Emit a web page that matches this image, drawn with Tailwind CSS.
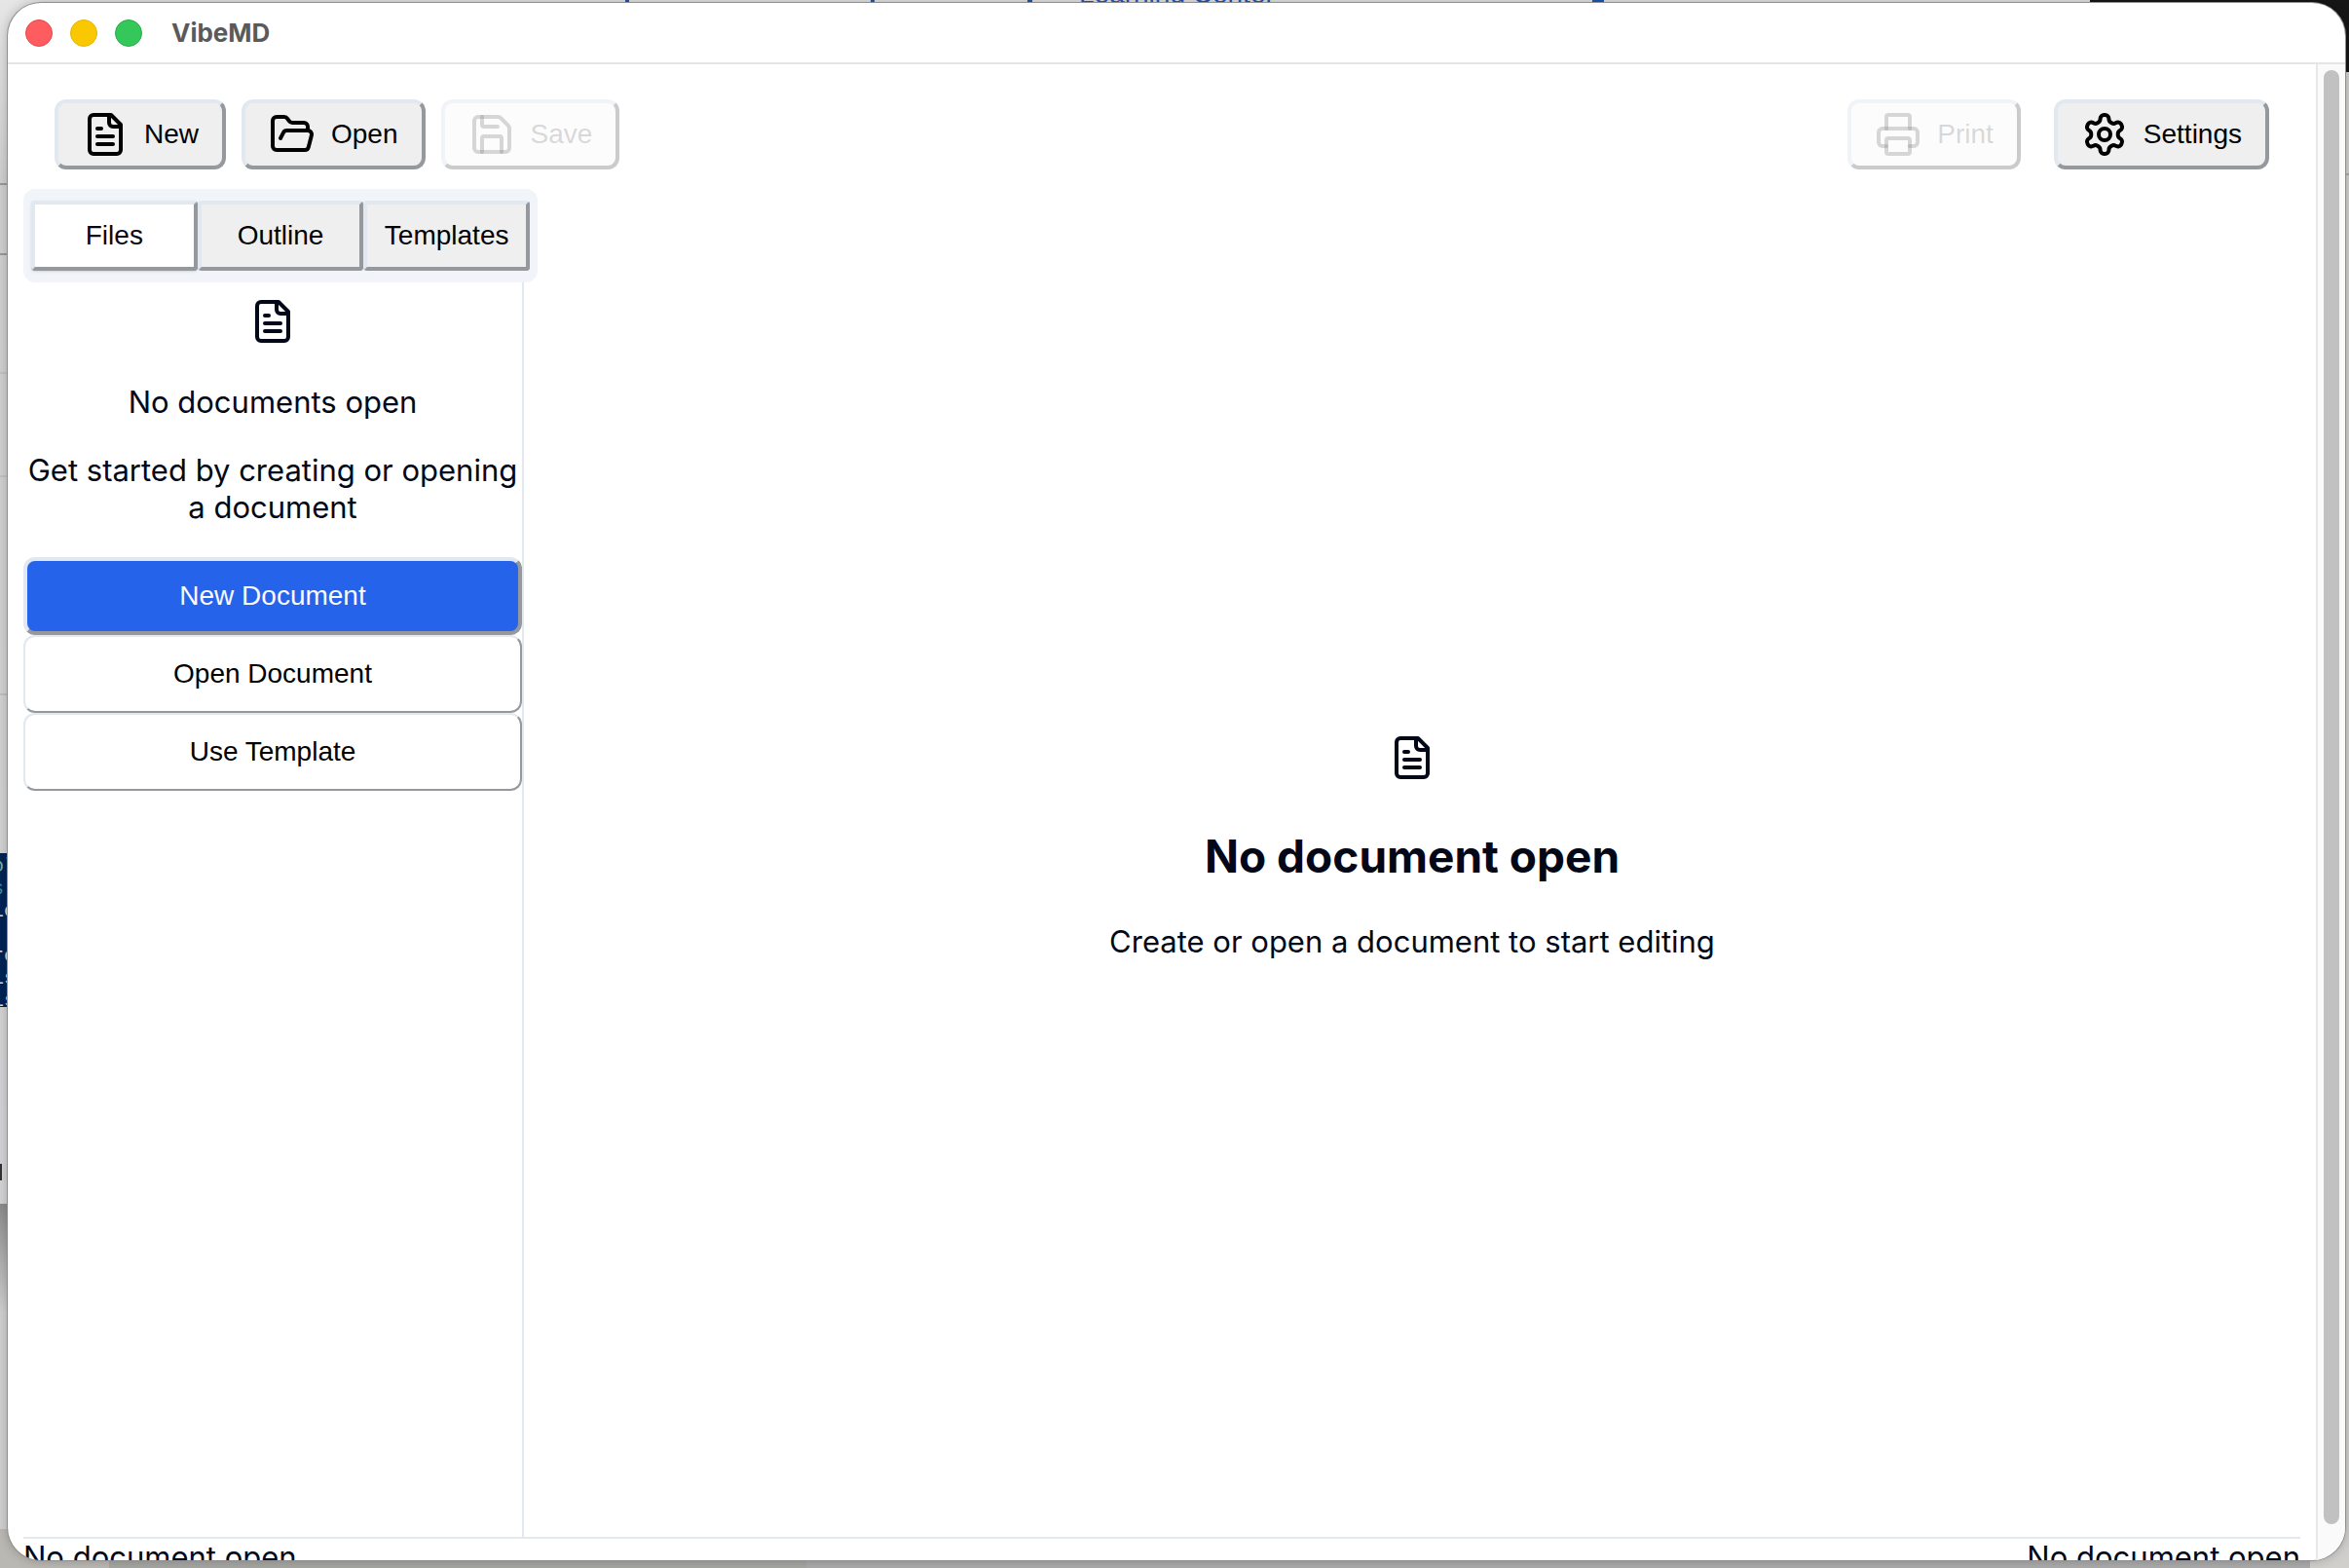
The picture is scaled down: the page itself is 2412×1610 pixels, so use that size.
<!DOCTYPE html>
<html lang="en">
<head>
<meta charset="utf-8">
<title>VibeMD</title>
<script src="https://cdn.jsdelivr.net/npm/@tailwindcss/browser@4"></script>
</head>
<body class="relative isolate h-screen overflow-hidden bg-[#d0d0d0] pt-[3px] pr-1 pb-2 pl-2 font-[Inter,sans-serif] text-[31px] leading-[38px] text-[#020817]">

<!-- Desktop behind the window -->
<div class="absolute inset-0 -z-10 overflow-hidden" aria-hidden="true">
  <div class="absolute inset-x-0 top-0 h-10 bg-[#e2e2e2]"></div>
  <div class="absolute top-0 left-[642px] h-1 w-1 bg-[#1f55b5]"></div>
  <div class="absolute top-0 left-[894px] h-1 w-1 bg-[#1f55b5]"></div>
  <div class="absolute top-0 left-[1055px] h-1 w-[5px] bg-[#1f55b5]"></div>
  <div class="absolute -top-[22px] left-[1108px] font-['Liberation_Sans',sans-serif] text-[28px] leading-8 text-[#1f55b5]">Learning Center</div>
  <div class="absolute top-0 left-[1635px] h-1 w-3 bg-[#1f55b5]"></div>
  <div class="absolute top-0 left-0 h-[1240px] w-10 bg-linear-to-b from-[#e6e6e6] via-[#cfcfcf] via-15% to-[#d4d4d6]"></div>
  <div class="absolute top-[188px] left-0 h-[2px] w-10 bg-[#999999]"></div>
  <div class="absolute top-[260px] left-0 h-[2px] w-10 bg-[#999999]"></div>
  <div class="absolute top-[382px] left-0 h-[2px] w-10 bg-[#c2c2c2]"></div>
  <div class="absolute top-[488px] left-0 h-[2px] w-10 bg-[#c2c2c2]"></div>
  <div class="absolute top-[712px] left-0 h-[2px] w-10 bg-[#bfbfbf]"></div>
  <pre class="absolute top-[876px] left-0 h-[158px] w-2 overflow-hidden bg-[#012456] pt-[2px] font-['Liberation_Mono',monospace] text-[20px] leading-[23px] text-[#d8dde6]"><span class="-ml-2 block text-[#7fb09a]">ol</span><span class="-ml-2 block text-[#3f8f9c]">s:</span><span class="-ml-2 block">lo</span><span class="block h-[23px]"></span><span class="-ml-2 block">re</span><span class="-ml-2 block">is</span><span class="-ml-2 block">is</span></pre>
  <div class="absolute top-[1195px] left-0 h-[17px] w-[2px] bg-[#333333]"></div>
  <div class="absolute top-[1236px] left-0 h-[374px] w-10 bg-linear-to-b from-[#8c8c8c] to-[#d0d0d0] to-30%"></div>
  <div class="absolute bottom-0 left-0 h-10 w-[112px] bg-[#b9b8b3]"></div>
  <div class="absolute right-0 bottom-0 left-[112px] h-5 bg-[#a6a6a2]"></div>
  <div class="absolute right-0 bottom-0 left-[828px] h-5 bg-[#ababab]"></div>
  <div class="absolute right-0 bottom-0 h-[1540px] w-10 bg-[#d0cfcb]"></div>
  <div class="absolute top-[178px] right-0 h-[2px] w-10 bg-[#aaaaaa]"></div>
  <div class="absolute top-0 right-0 h-[74px] w-[266px] bg-[#161616]"></div>
</div>

<div class="flex h-full flex-col overflow-hidden rounded-[34px] bg-white shadow-[0_0_0_1px_#8f8f8f,0_0_12px_rgba(0,0,0,0.25)]">
  <header class="flex h-[63px] shrink-0 items-center gap-[18px] border-b-2 border-[#e5e5e5] pl-[18px]">
    <button type="button" aria-label="Close" class="size-7 rounded-full border border-[#e2464a] bg-[#ff5c60]"></button>
    <button type="button" aria-label="Minimize" class="size-7 rounded-full border border-[#e6b400] bg-[#fac800]"></button>
    <button type="button" aria-label="Zoom" class="size-7 rounded-full border border-[#26ad49] bg-[#34c759]"></button>
    <h1 class="pt-px pl-3 text-[26px] font-bold text-[#5a5a5a]">VibeMD</h1>
  </header>

  <div class="flex min-h-0 flex-1">
    <div class="flex min-w-0 flex-1 flex-col px-4">
      <div class="flex shrink-0 items-center gap-4 px-8 pt-9 pb-5 font-['Liberation_Sans',sans-serif] text-[28px] leading-8 text-black">
        <button type="button" class="flex h-[72px] items-center gap-4 rounded-xl border-4 border-[#e2e8f0] border-r-[#95989d] border-b-[#95989d] bg-[#efefef] px-6">
          <svg class="size-12" viewBox="0 0 24 24" fill="none" stroke="currentColor" stroke-width="2" stroke-linecap="round" stroke-linejoin="round"><path d="M15 2H6a2 2 0 0 0-2 2v16a2 2 0 0 0 2 2h12a2 2 0 0 0 2-2V7Z"/><path d="M14 2v4a2 2 0 0 0 2 2h4"/><path d="M10 9H8"/><path d="M16 13H8"/><path d="M16 17H8"/></svg>
          New
        </button>
        <button type="button" class="flex h-[72px] items-center gap-4 rounded-xl border-4 border-[#e2e8f0] border-r-[#95989d] border-b-[#95989d] bg-[#efefef] px-6">
          <svg class="size-12" viewBox="0 0 24 24" fill="none" stroke="currentColor" stroke-width="2" stroke-linecap="round" stroke-linejoin="round"><path d="m6 14 1.5-2.9A2 2 0 0 1 9.24 10H20a2 2 0 0 1 1.94 2.5l-1.54 6a2 2 0 0 1-1.95 1.5H4a2 2 0 0 1-2-2V5a2 2 0 0 1 2-2h3.9a2 2 0 0 1 1.69.9l.81 1.2a2 2 0 0 0 1.67.9H18a2 2 0 0 1 2 2v2"/></svg>
          Open
        </button>
        <button type="button" disabled class="flex h-[72px] items-center gap-4 rounded-xl border-4 border-[#e2e8f0] border-r-[#95989d] border-b-[#95989d] bg-[#fafafa] px-6 text-black/30 opacity-50">
          <svg class="size-12" viewBox="0 0 24 24" fill="none" stroke="currentColor" stroke-width="2" stroke-linecap="round" stroke-linejoin="round"><path d="M15.2 3a2 2 0 0 1 1.4.6l3.8 3.8a2 2 0 0 1 .6 1.4V19a2 2 0 0 1-2 2H5a2 2 0 0 1-2-2V5a2 2 0 0 1 2-2z"/><path d="M17 21v-7a1 1 0 0 0-1-1H8a1 1 0 0 0-1 1v7"/><path d="M7 3v4a1 1 0 0 0 1 1h7"/></svg>
          Save
        </button>
        <button type="button" disabled class="ml-auto flex h-[72px] items-center gap-4 rounded-xl border-4 border-[#e2e8f0] border-r-[#95989d] border-b-[#95989d] bg-[#fafafa] px-6 text-black/30 opacity-50">
          <svg class="size-12" viewBox="0 0 24 24" fill="none" stroke="currentColor" stroke-width="2" stroke-linecap="round" stroke-linejoin="round"><path d="M6 18H4a2 2 0 0 1-2-2v-5a2 2 0 0 1 2-2h16a2 2 0 0 1 2 2v5a2 2 0 0 1-2 2h-2"/><path d="M6 9V3a1 1 0 0 1 1-1h10a1 1 0 0 1 1 1v6"/><rect x="6" y="14" width="12" height="8" rx="1"/></svg>
          Print
        </button>
        <button type="button" class="ml-[18px] flex h-[72px] items-center gap-4 rounded-xl border-4 border-[#e2e8f0] border-r-[#95989d] border-b-[#95989d] bg-[#efefef] px-6">
          <svg class="size-12" viewBox="0 0 24 24" fill="none" stroke="currentColor" stroke-width="2" stroke-linecap="round" stroke-linejoin="round"><path d="M12.22 2h-.44a2 2 0 0 0-2 2v.18a2 2 0 0 1-1 1.73l-.43.25a2 2 0 0 1-2 0l-.15-.08a2 2 0 0 0-2.73.73l-.22.38a2 2 0 0 0 .73 2.73l.15.1a2 2 0 0 1 1 1.72v.51a2 2 0 0 1-1 1.74l-.15.09a2 2 0 0 0-.73 2.73l.22.38a2 2 0 0 0 2.73.73l.15-.08a2 2 0 0 1 2 0l.43.25a2 2 0 0 1 1 1.73V20a2 2 0 0 0 2 2h.44a2 2 0 0 0 2-2v-.18a2 2 0 0 1 1-1.73l.43-.25a2 2 0 0 1 2 0l.15.08a2 2 0 0 0 2.73-.73l.22-.39a2 2 0 0 0-.73-2.73l-.15-.08a2 2 0 0 1-1-1.74v-.5a2 2 0 0 1 1-1.74l.15-.09a2 2 0 0 0 .73-2.73l-.22-.38a2 2 0 0 0-2.73-.73l-.15.08a2 2 0 0 1-2 0l-.43-.25a2 2 0 0 1-1-1.73V4a2 2 0 0 0-2-2z"/><circle cx="12" cy="12" r="3"/></svg>
          Settings
        </button>
      </div>

      <div class="flex min-h-0 flex-1">
        <aside class="flex w-[514px] shrink-0 flex-col border-r-2 border-[#e2e8f0]">
          <div role="tablist" class="grid h-24 w-[528px] shrink-0 grid-cols-3 items-center rounded-xl bg-[#f1f5f9] px-2 font-['Liberation_Sans',sans-serif] text-[28px] leading-8 text-black">
            <button type="button" role="tab" aria-selected="true" class="h-[72px] rounded-sm border-4 border-[#e2e8f0] border-r-[#95989d] border-b-[#95989d] bg-white text-[#020817] shadow-sm">Files</button>
            <button type="button" role="tab" aria-selected="false" class="h-[72px] rounded-sm border-4 border-[#e2e8f0] border-r-[#95989d] border-b-[#95989d] bg-[#efefef]">Outline</button>
            <button type="button" role="tab" aria-selected="false" class="h-[72px] rounded-sm border-4 border-[#e2e8f0] border-r-[#95989d] border-b-[#95989d] bg-[#efefef]">Templates</button>
          </div>
          <div class="flex flex-col items-center pt-4 text-center">
            <svg class="size-12" viewBox="0 0 24 24" fill="none" stroke="currentColor" stroke-width="2" stroke-linecap="round" stroke-linejoin="round"><path d="M15 2H6a2 2 0 0 0-2 2v16a2 2 0 0 0 2 2h12a2 2 0 0 0 2-2V7Z"/><path d="M14 2v4a2 2 0 0 0 2 2h4"/><path d="M10 9H8"/><path d="M16 13H8"/><path d="M16 17H8"/></svg>
            <p class="mt-10">No documents open</p>
            <p class="mt-8">Get started by creating or opening a document</p>
          </div>
          <div class="mt-8 grid font-['Liberation_Sans',sans-serif] text-[28px] leading-8 text-black">
            <button type="button" class="h-20 rounded-xl border-4 border-[#e2e8f0] border-r-[#95989d] border-b-[#95989d] bg-[#2563eb] text-[#f8fafc]">New Document</button>
            <button type="button" class="h-20 rounded-xl border-2 border-[#e2e8f0] border-r-[#95989d] border-b-[#95989d] bg-white">Open Document</button>
            <button type="button" class="h-20 rounded-xl border-2 border-[#e2e8f0] border-r-[#95989d] border-b-[#95989d] bg-white">Use Template</button>
          </div>
        </aside>

        <main class="flex flex-1 flex-col items-center justify-center pb-8 text-center">
          <svg class="size-12" viewBox="0 0 24 24" fill="none" stroke="currentColor" stroke-width="2" stroke-linecap="round" stroke-linejoin="round"><path d="M15 2H6a2 2 0 0 0-2 2v16a2 2 0 0 0 2 2h12a2 2 0 0 0 2-2V7Z"/><path d="M14 2v4a2 2 0 0 0 2 2h4"/><path d="M10 9H8"/><path d="M16 13H8"/><path d="M16 17H8"/></svg>
          <h2 class="mt-12 text-[46px] leading-[58px] font-bold">No document open</h2>
          <p class="mt-10">Create or open a document to start editing</p>
        </main>
      </div>

      <footer class="flex h-6 shrink-0 justify-between border-t-2 border-[#e2e8f0]">
        <span>No document open</span>
        <span>No document open</span>
      </footer>
    </div>

    <!-- Scrollbar -->
    <div class="flex w-[30px] shrink-0 justify-center border-l-2 border-[#e8e8e8] bg-[#fafafa] pt-[6px] pb-[37px]">
      <div class="w-4 rounded-full bg-[#c1c1c1]"></div>
    </div>
  </div>
</div>
</body>
</html>
